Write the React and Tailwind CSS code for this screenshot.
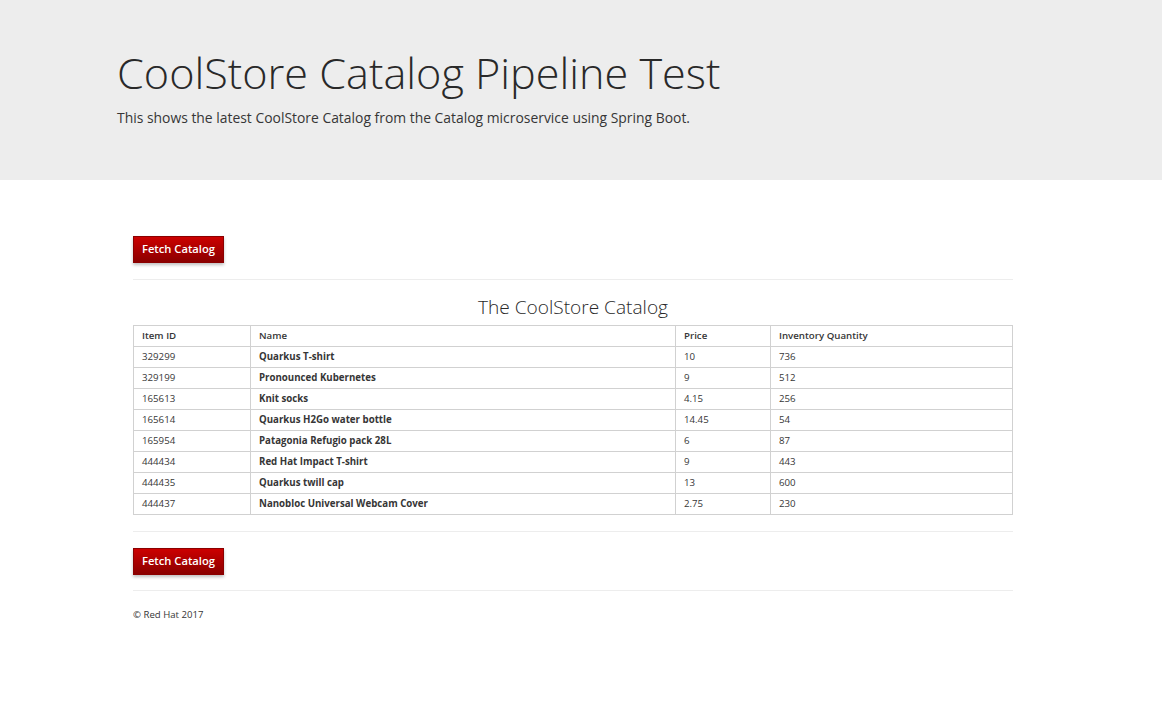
import React from "react";

const rows = [
  ["329299", "Quarkus T-shirt", "10", "736"],
  ["329199", "Pronounced Kubernetes", "9", "512"],
  ["165613", "Knit socks", "4.15", "256"],
  ["165614", "Quarkus H2Go water bottle", "14.45", "54"],
  ["165954", "Patagonia Refugio pack 28L", "6", "87"],
  ["444434", "Red Hat Impact T-shirt", "9", "443"],
  ["444435", "Quarkus twill cap", "13", "600"],
  ["444437", "Nanobloc Universal Webcam Cover", "2.75", "230"],
];

function FetchButton() {
  return (
    <button className="h-[27px] w-[91px] border border-[#8b0000] bg-gradient-to-b from-[#cc0000] to-[#8b0000] text-[11.2px] font-semibold text-white shadow-[0_2px_3px_rgba(0,0,0,0.25)]">
      Fetch Catalog
    </button>
  );
}

export default function App() {
  return (
    <div className="min-h-[707px] bg-white text-[#363636]" style={{ fontFamily: '"Open Sans", sans-serif' }}>
      <div className="h-[180px] bg-[#ededed] pl-[117px] pt-[45px]">
        <h1 className="text-[43.2px] font-light leading-[56px] text-[#292929]">CoolStore Catalog Pipeline Test</h1>
        <p className="mt-[6px] text-[13.9px] leading-[22px] text-[#363636]">
          This shows the latest CoolStore Catalog from the Catalog microservice using Spring Boot.
        </p>
      </div>
      <div className="ml-[133px] w-[880px] pt-[55px]">
        <FetchButton />
        <div className="mt-[16px] h-px bg-[#ededed]" />
        <div className="mt-[15px] text-center text-[19.1px] font-light leading-[24px] text-[#292929]">The CoolStore Catalog</div>
        <table className="mt-[6px] w-full border-collapse border border-[#d1d1d1] text-[9.7px] text-[#363636]">
          <thead>
            <tr className="h-[21px]">
              <th className="w-[117px] border border-[#d1d1d1] px-[8px] text-left font-semibold">Item ID</th>
              <th className="w-[425px] border border-[#d1d1d1] px-[8px] text-left font-semibold">Name</th>
              <th className="w-[95px] border border-[#d1d1d1] px-[8px] text-left font-semibold">Price</th>
              <th className="border border-[#d1d1d1] px-[8px] text-left font-semibold">Inventory Quantity</th>
            </tr>
          </thead>
          <tbody>
            {rows.map((r) => (
              <tr key={r[0]} className="h-[21px]">
                <td className="border border-[#d1d1d1] px-[8px]">{r[0]}</td>
                <td className="border border-[#d1d1d1] px-[8px] font-bold">{r[1]}</td>
                <td className="border border-[#d1d1d1] px-[8px]">{r[2]}</td>
                <td className="border border-[#d1d1d1] px-[8px]">{r[3]}</td>
              </tr>
            ))}
          </tbody>
        </table>
        <div className="mt-[16px] h-px bg-[#ededed]" />
        <div className="mt-[15px]">
          <FetchButton />
        </div>
        <div className="mt-[15px] h-px bg-[#ededed]" />
        <div className="mt-[17px] text-[9.6px] leading-[14px]">© Red Hat 2017</div>
      </div>
    </div>
  );
}
